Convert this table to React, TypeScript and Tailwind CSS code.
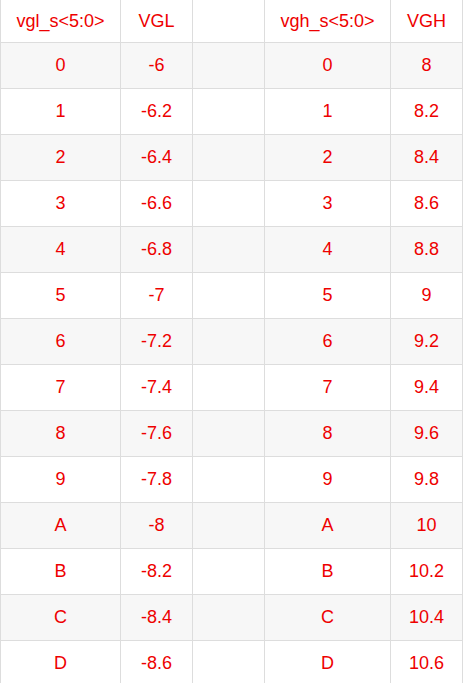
import React from "react";

const rows: [string, string, string, string][] = [
  ["0", "-6", "0", "8"],
  ["1", "-6.2", "1", "8.2"],
  ["2", "-6.4", "2", "8.4"],
  ["3", "-6.6", "3", "8.6"],
  ["4", "-6.8", "4", "8.8"],
  ["5", "-7", "5", "9"],
  ["6", "-7.2", "6", "9.2"],
  ["7", "-7.4", "7", "9.4"],
  ["8", "-7.6", "8", "9.6"],
  ["9", "-7.8", "9", "9.8"],
  ["A", "-8", "A", "10"],
  ["B", "-8.2", "B", "10.2"],
  ["C", "-8.4", "C", "10.4"],
  ["D", "-8.6", "D", "10.6"],
];

function Row({ cells, h, bg }: { cells: string[]; h: string; bg: string }) {
  return (
    <div className={`flex ${h} ${bg} border-b border-[#dddddd]`}>
      <div className="w-[121px] shrink-0 border-l border-r border-[#dddddd] flex items-center justify-center">{cells[0]}</div>
      <div className="w-[72px] shrink-0 border-r border-[#dddddd] flex items-center justify-center">{cells[1]}</div>
      <div className="w-[72px] shrink-0 border-r border-[#dddddd] flex items-center justify-center">{cells[2]}</div>
      <div className="w-[126px] shrink-0 border-r border-[#dddddd] flex items-center justify-center">{cells[3]}</div>
      <div className="w-[72px] shrink-0 border-r border-[#dddddd] flex items-center justify-center">{cells[4]}</div>
    </div>
  );
}

export default function App() {
  return (
    <div className="w-[463px] h-[683px] overflow-hidden bg-white text-[#ee0000] text-[18px] font-['Liberation_Sans',Arial,sans-serif]">
      <Row cells={["vgl_s<5:0>", "VGL", "", "vgh_s<5:0>", "VGH"]} h="h-[43px]" bg="bg-white" />
      {rows.map((r, i) => (
        <Row
          key={i}
          cells={[r[0], r[1], "", r[2], r[3]]}
          h="h-[46px]"
          bg={i % 2 === 0 ? "bg-[#f7f7f7]" : "bg-white"}
        />
      ))}
    </div>
  );
}
